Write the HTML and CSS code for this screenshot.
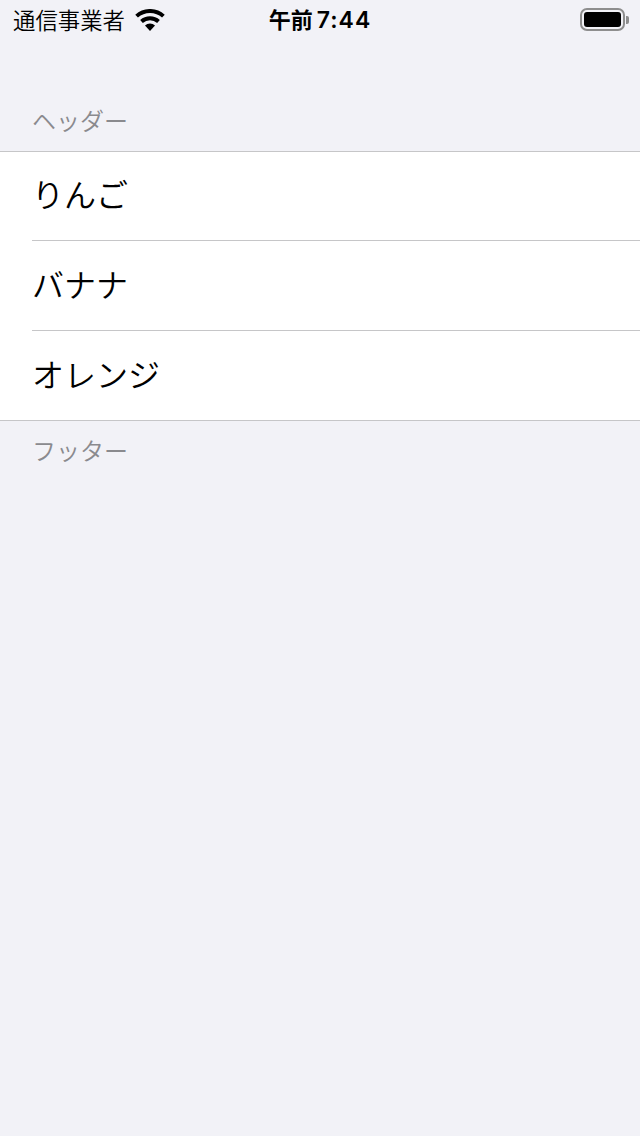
FILE: index.html
```html
<!DOCTYPE html>
<html lang="ja">
<head>
<meta charset="utf-8">
<title>リスト</title>
<link rel="stylesheet" href="styles.css">
</head>
<body>
<header class="status">
  <div class="status-left">
    <span class="carrier">通信事業者</span>
    <svg class="wifi" width="30" height="22" viewBox="0 0 30 22">
      <path class="wifi-arc" d="M1.600 7.140A20 20 0 0 1 28.400 7.140"/>
      <path class="wifi-arc" d="M6.500 12.560A12.700 12.700 0 0 1 23.500 12.560"/>
      <path class="wifi-dot" d="M15 22L10 16.430A7.500 7.500 0 0 1 20 16.430Z"/>
    </svg>
  </div>
  <div class="clock"><span class="clock-ampm">午前</span><span class="clock-time">7:44</span></div>
  <div class="status-right">
    <div class="battery"><div class="battery-fill"></div></div>
    <div class="battery-cap"></div>
  </div>
</header>
<main class="table">
  <div class="section-header">ヘッダー</div>
  <ul class="rows">
    <li class="row"><span class="row-text">りんご</span></li>
    <li class="row"><span class="row-text">バナナ</span></li>
    <li class="row"><span class="row-text">オレンジ</span></li>
  </ul>
  <div class="section-footer">フッター</div>
</main>
</body>
</html>
```
FILE: styles.css
```css
* { box-sizing: border-box; }
html, body { margin: 0; padding: 0; }
body {
  width: 640px;
  height: 1136px;
  overflow: hidden;
  background: #f2f2f7;
  color: #000;
  font-family: "Noto Sans CJK JP", "Liberation Sans", sans-serif;
  font-weight: 350;
}
.status {
  height: 40px;
  display: grid;
  grid-template-columns: 1fr auto 1fr;
  align-items: center;
  padding: 0 11px 0 13px;
}
.status-left { display: flex; align-items: center; gap: 10px; }
.carrier { font-size: 22.400px; line-height: 40px; margin-top: -2px; }
.wifi { display: block; fill: #000; }
.wifi-arc { fill: none; stroke: #000; stroke-width: 4; }
.clock {
  display: flex;
  align-items: center;
  gap: 4px;
  line-height: 40px;
  font-weight: 700;
  margin-left: -2px;
}
.clock-ampm { font-size: 22px; margin-top: -4px; }
.clock-time {
  font-family: "Inter", sans-serif;
  font-size: 23px;
  font-weight: 600;
  letter-spacing: 1px;
  margin-top: -1px;
}
.status-right { display: flex; justify-content: flex-end; align-items: center; gap: 1px; margin-top: -1px; }
.battery {
  width: 45px;
  height: 23px;
  border: 2px solid #8e8e8e;
  border-radius: 7px;
  padding: 2px;
}
.battery-fill { width: 100%; height: 100%; background: #000; border-radius: 3px; }
.battery-cap { width: 3px; height: 8px; background: #8e8e8e; border-radius: 0 2px 2px 0; }
.section-header {
  height: 111px;
  padding: 40px 32px 0;
  font-size: 24px;
  line-height: 80px;
  color: #8a8a8e;
}
.rows {
  list-style: none;
  margin: 0;
  padding: 0;
  background: #fff;
  border-top: 1px solid #c6c6c8;
  border-bottom: 1px solid #c6c6c8;
}
.row { height: 90px; padding-left: 32px; }
.row:first-child { height: 89px; }
.row-text {
  display: flex;
  align-items: center;
  height: 100%;
  padding-bottom: 6px;
  font-size: 32px;
  border-bottom: 1px solid #c6c6c8;
}
.row:last-child { height: 89px; }
.row:last-child .row-text { border-bottom: 0; }
.section-footer {
  padding: 11px 32px 0;
  font-size: 24px;
  line-height: 36px;
  color: #8a8a8e;
}
```
